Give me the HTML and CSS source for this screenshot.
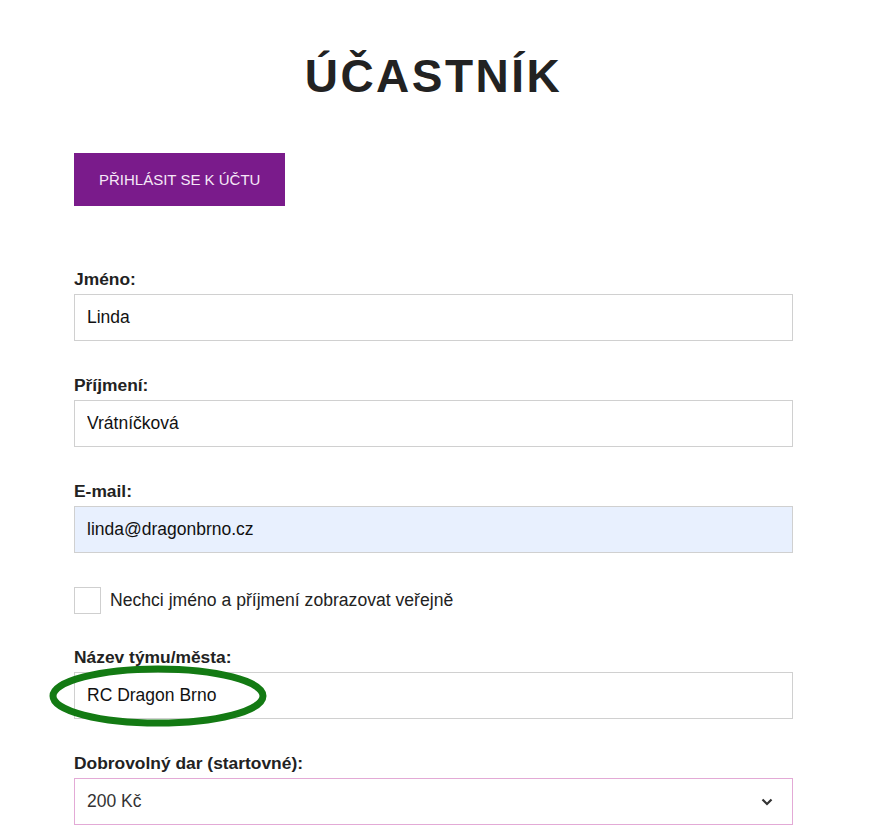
FILE: index.html
```html
<!DOCTYPE html>
<html lang="cs">
<head>
    <meta charset="UTF-8">
    <meta name="viewport" content="width=device-width, initial-scale=1.0">
    <title>Účastník</title>
    <link rel="stylesheet" href="styles.css">
</head>
<body>
    <div class="container">
        <h1>ÚČASTNÍK</h1>

        <button class="login-btn">Přihlásit se k účtu</button>

        <div class="field">
            <label for="jmeno">Jméno:</label>
            <input type="text" id="jmeno" value="Linda">
        </div>

        <div class="field">
            <label for="prijmeni">Příjmení:</label>
            <input type="text" id="prijmeni" value="Vrátníčková">
        </div>

        <div class="field">
            <label for="email">E-mail:</label>
            <input type="email" id="email" class="autofill" value="linda@dragonbrno.cz">
        </div>

        <div class="check-row">
            <span class="checkbox"></span>
            <span class="check-text">Nechci jméno a příjmení zobrazovat veřejně</span>
        </div>

        <div class="field">
            <label for="tym">Název týmu/města:</label>
            <div class="marked">
                <input type="text" id="tym" value="RC Dragon Brno">
                <svg class="circle" width="220" height="64" viewBox="0 0 220 64">
                    <ellipse cx="110" cy="32" rx="105" ry="27" fill="none" stroke="#137a13" stroke-width="7"/>
                </svg>
            </div>
        </div>

        <div class="field">
            <label for="dar">Dobrovolný dar (startovné):</label>
            <div class="select">
                <span>200 Kč</span>
                <svg width="12" height="8" viewBox="0 0 12 8">
                    <path d="M1.5 1.5 L6 6 L10.5 1.5" fill="none" stroke="#333" stroke-width="2.2"/>
                </svg>
            </div>
        </div>
    </div>
</body>
</html>
```

FILE: styles.css
```css
body {
    font-family: "Liberation Sans", Arial, sans-serif;
    margin: 0;
    color: #222;
    background: #fff;
}
.container {
    width: 719px;
    margin-left: 74px;
}
h1 {
    font-size: 46px;
    letter-spacing: 2.5px;
    text-align: center;
    margin: 50px 0 0;
    line-height: 53px;
}
.login-btn {
    display: block;
    margin-top: 50px;
    height: 53px;
    padding: 0 25px;
    background-color: #7a1b8b;
    color: #f6e8f7;
    border: none;
    font-family: inherit;
    font-size: 15px;
    text-transform: uppercase;
    cursor: pointer;
}
.field {
    margin-top: 64px;
}
.field + .field {
    margin-top: 35px;
}
label {
    display: block;
    font-weight: bold;
    font-size: 17.4px;
    line-height: 18px;
    margin-bottom: 6px;
}
input {
    display: block;
    box-sizing: border-box;
    width: 100%;
    height: 47px;
    padding: 0 12px;
    border: 1px solid #d0d0d0;
    font-family: inherit;
    font-size: 17.5px;
    color: #111;
    background: #fff;
}
input.autofill {
    background: #e8f0fe;
}
.check-row {
    display: flex;
    align-items: center;
    gap: 9px;
    margin-top: 34px;
    margin-bottom: 34px;
    height: 27px;
}
.check-row + .field {
    margin-top: 0;
}
.checkbox {
    box-sizing: border-box;
    width: 27px;
    height: 27px;
    border: 1px solid #cfcfcf;
    background: #fff;
}
.check-text {
    font-size: 17.6px;
}
.marked {
    position: relative;
}
.circle {
    position: absolute;
    left: -26px;
    top: -8px;
}
.select {
    box-sizing: border-box;
    height: 47px;
    display: flex;
    align-items: center;
    justify-content: space-between;
    padding: 0 19px 0 12px;
    border: 1px solid #e3aad6;
    font-size: 17.5px;
    color: #333;
}
```
